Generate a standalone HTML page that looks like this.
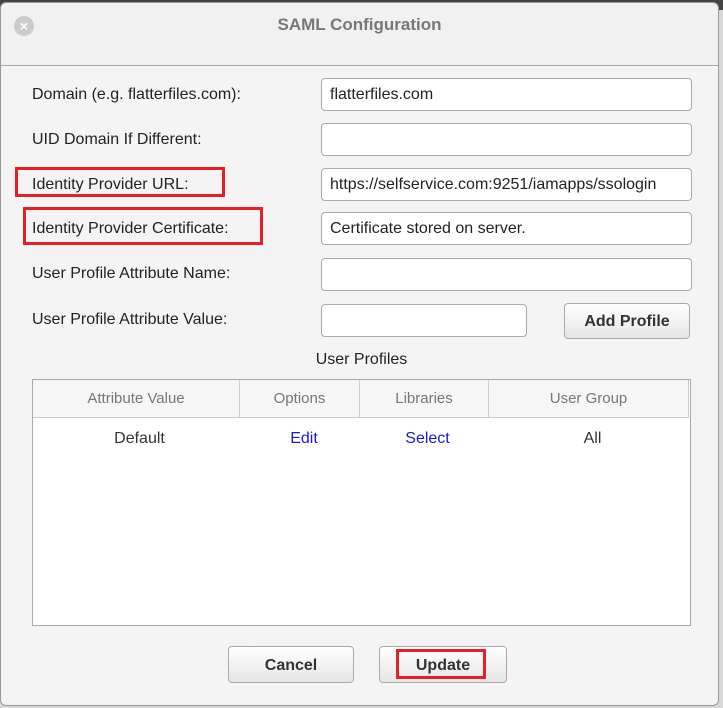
<!DOCTYPE html><html><head><style>
body{margin:0;width:723px;height:708px;background:#d8d8d8;position:relative;overflow:hidden;font-family:"Liberation Sans",sans-serif;}
.dlg{position:absolute;left:0;top:2px;width:717px;height:702px;background:#f4f4f4;border:1px solid #999;border-radius:6px;}
.title{position:absolute;left:0;top:0;width:717px;height:62px;border-bottom:1px solid #aaa;background:#f1f1f1;border-radius:6px 6px 0 0;text-align:center;line-height:44px;font-weight:bold;font-size:17px;color:#777;}
.x{position:absolute;left:13px;top:13px;width:20px;height:20px;border-radius:50%;background:#ccc;color:#fff;font-size:14px;line-height:20px;text-align:center;}
.l{position:absolute;left:32px;font-size:16px;color:#222;}
.i{position:absolute;left:321px;background:#fff;border:1px solid #aaa;border-radius:4px;font-size:16px;line-height:31px;padding-left:8px;box-sizing:border-box;width:371px;height:33px;color:#222;white-space:nowrap;overflow:hidden;}
.btn{position:absolute;border:1px solid #aaa;border-radius:4px;background:linear-gradient(#fff,#e6e6e6);font-weight:bold;font-size:16px;color:#333;text-align:center;}
.red{position:absolute;border:3px solid #e5202a;}
.tb{position:absolute;left:32px;top:379px;width:657px;height:245px;background:#fff;border:1px solid #aaa;}
.th{position:absolute;top:0;height:37px;line-height:37px;border-right:1px solid #ccc;border-bottom:1px solid #ccc;background:#f6f6f6;color:#777;font-size:15px;text-align:center;}
.td{position:absolute;top:50px;font-size:16px;text-align:center;color:#333;}
</style></head><body>
<div style="position:absolute;left:0;top:0;width:723px;height:10px;background:#444"></div>
<div class="dlg">
<div class="title"><div class="x">×</div>SAML Configuration</div>
</div>
<div class="l" style="top:86px">Domain (e.g. flatterfiles.com):</div>
<div class="l" style="top:131px">UID Domain If Different:</div>
<div class="l" style="top:176px">Identity Provider URL:</div>
<div class="l" style="top:220px">Identity Provider Certificate:</div>
<div class="l" style="top:265px">User Profile Attribute Name:</div>
<div class="l" style="top:311px">User Profile Attribute Value:</div>
<div class="i" style="top:78px">flatterfiles.com</div>
<div class="i" style="top:123px"></div>
<div class="i" style="top:168px">https://selfservice.com:9251/iamapps/ssologin</div>
<div class="i" style="top:212px">Certificate stored on server.</div>
<div class="i" style="top:258px"></div>
<div class="i" style="top:304px;width:206px"></div>
<div class="btn" style="left:564px;top:303px;width:124px;height:34px;line-height:36px">Add Profile</div>
<div style="position:absolute;left:0;width:723px;top:351px;text-align:center;font-size:16px;color:#222">User Profiles</div>
<div class="tb">
<div class="th" style="left:0;width:206px">Attribute Value</div>
<div class="th" style="left:207px;width:119px">Options</div>
<div class="th" style="left:327px;width:128px">Libraries</div>
<div class="th" style="left:456px;width:199px">User Group</div>
<div class="td" style="left:0;width:213px">Default</div>
<div class="td" style="left:207px;width:128px;color:#1a1acc">Edit</div>
<div class="td" style="left:327px;width:135px;color:#1a1acc">Select</div>
<div class="td" style="left:456px;width:207px">All</div>
</div>
<div class="btn" style="left:228px;top:646px;width:124px;height:35px;line-height:37px">Cancel</div>
<div class="btn" style="left:379px;top:646px;width:126px;height:35px;line-height:37px">Update</div>
<div class="red" style="left:15px;top:167px;width:204px;height:24px"></div>
<div class="red" style="left:23px;top:207px;width:234px;height:32px"></div>
<div class="red" style="left:396px;top:649px;width:84px;height:24px"></div>
</body></html>
